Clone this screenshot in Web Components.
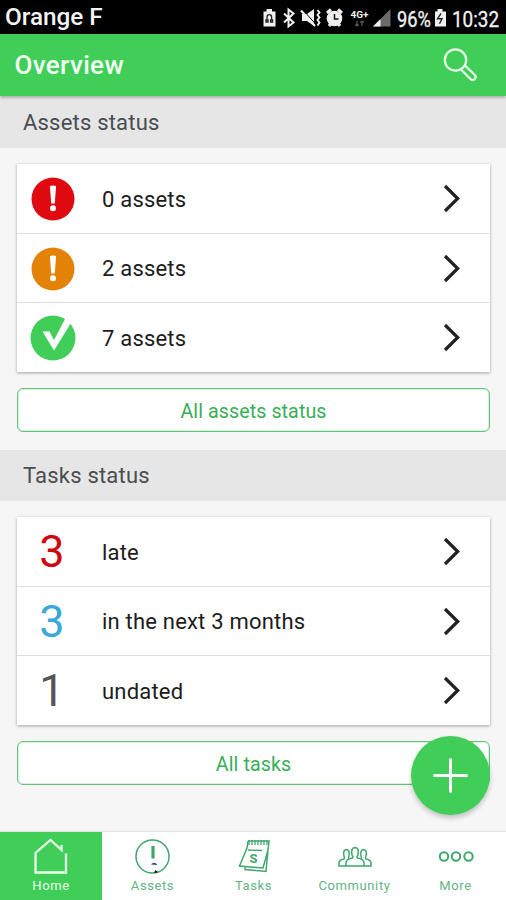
<!DOCTYPE html>
<html lang="en">
<head>
<meta charset="utf-8">
<title>Overview</title>
<style>
html,body{margin:0;height:100%;background:#f6f6f6}
body{font-family:Roboto,"Liberation Sans",sans-serif;overflow:hidden}
</style>
</head>
<body>
<overview-app></overview-app>
<script>
const define = (name, html) => customElements.define(name, class extends HTMLElement {
  constructor() {
    super();
    const t = document.createElement('template');
    t.innerHTML = html;
    this.attachShadow({mode: 'open'}).append(t.content.cloneNode(true));
  }
});

define('status-bar', `<style>
:host{display:flex;height:34px;background:#000;color:#f4f4f4;box-sizing:border-box;padding:0 0 0 5px;justify-content:space-between;align-items:center}
.name{font-size:24.300px;font-weight:500;line-height:34px}
svg{display:block;width:246px;height:34px}
text{font-family:Roboto,sans-serif}
</style>
<span class="name">Orange F</span>
<svg viewBox="260 0 246 34" fill="#f0f0f0">
  <path d="M263.500 11.500h3V9h5.500v2.500h3.500V26.500h-12z"/>
  <path d="M267 20v-3a2.300 2.300 0 0 1 4.600 0v3m-5.600 0h2v2h-2zm4.600 0h2v2h-2z" fill="none" stroke="#222" stroke-width="1.300"/>
  <path d="M284 13.500l9.500 9-5 4V9.500l5 4-9.500 9" fill="none" stroke="#f0f0f0" stroke-width="2"/>
  <path d="M302 14h5l7-5v17l-7-5h-5z"/>
  <path d="M303 10l13 14.500" stroke="#000" stroke-width="1"/>
  <path d="M301 10.500l14 15.500" stroke="#f0f0f0" stroke-width="2"/>
  <path d="M317.500 10l2 2.500-2 2.500 2 2.500-2 2.500 2 2.500-2 3" fill="none" stroke="#f0f0f0" stroke-width="1.900"/>
  <circle cx="334.500" cy="18.500" r="7.800"/>
  <path d="M327 13l4-3.500M342 13l-4-3.500M329 26l2-2.500M340 26l-2-2.500" stroke="#f0f0f0" stroke-width="3"/>
  <path d="M334.500 14v5h4" fill="none" stroke="#111" stroke-width="1.500"/>
  <text x="350.500" y="17.500" font-size="9.500" font-weight="700" textLength="18" lengthAdjust="spacingAndGlyphs">4G+</text>
  <path d="M357 21v5m-1.800-1.500L357 26l1.800-1.500M362 26v-5m-1.800 1.500L362 21l1.800 1.500" fill="none" stroke="#555" stroke-width="1.300"/>
  <path d="M390.500 9v17.500H373z" fill="#6b6b6b"/>
  <path d="M380.500 19v7.500H373z"/>
  <text x="397" y="26.500" font-size="22" textLength="34" lengthAdjust="spacingAndGlyphs" stroke="#f0f0f0" stroke-width=".35">96%</text>
  <path d="M435 11.500h2.500V9h5v2.500h3.500V26.500h-11z"/>
  <path d="M441 13.500l-3.500 5.200h4.500l-2.500 5" fill="none" stroke="#222" stroke-width="1.400"/>
  <text x="452" y="26.500" font-size="22" textLength="47" lengthAdjust="spacingAndGlyphs" stroke="#f0f0f0" stroke-width=".35">10:32</text>
</svg>`);

define('app-header', `<style>
:host{display:flex;position:relative;height:62px;background:#40ce59;color:#f2fff3;align-items:center;justify-content:space-between;padding:0 28px 0 14.500px;box-sizing:border-box;box-shadow:0 1px 3px rgba(0,0,0,.4)}
h1{margin:0;font-size:26px;font-weight:500;letter-spacing:.35px;line-height:60px;padding-bottom:1px}
svg{display:block}
</style>
<h1><slot></slot></h1>
<svg width="36" height="36" viewBox="0 0 36 36" fill="none" stroke="#e8ffe9" stroke-width="2.200" stroke-linejoin="round">
  <circle cx="13.500" cy="13" r="10.700"/>
  <path d="M19 22.500l9.500 9.500a2.700 2.700 0 0 0 4.300-4L23 18.500"/>
</svg>`);

define('section-title', `<style>
:host{display:flex;height:51px;background:#e6e6e6;color:#494d52;align-items:center;padding-left:23px;font-size:22px;letter-spacing:.2px;box-sizing:border-box}
</style><slot></slot>`);

define('status-card', `<style>
:host{display:grid;grid-template-rows:70px 69px 69px;margin:0 16px 0 17px;background:#fff;box-shadow:0 1px 3px rgba(0,0,0,.35)}
::slotted(*:not(:last-child)){border-bottom:1.500px solid #dedede}
</style><slot></slot>`);

define('status-row', `<style>
:host{display:grid;grid-template-columns:70px 1fr 48px;box-sizing:border-box;align-items:center;color:#1c1c1c;font-size:22px;letter-spacing:.2px;padding-top:1px}
.lead{display:flex;justify-content:center;font-size:45px;letter-spacing:0;line-height:60px}
.label{padding:0 0 0 15px}
svg{display:block}
</style>
<div class="lead"><slot name="lead"></slot></div>
<div class="label"><slot></slot></div>
<svg width="20" height="30" viewBox="0 0 20 30" fill="none" stroke="#222" stroke-width="3.200"><path d="M3 2L15.700 14.500 3 27"/></svg>`);

define('alert-icon', `<style>:host{display:block;margin-left:1.500px}svg{display:block}</style>
<svg width="46" height="46" viewBox="0 0 46 46"><circle cx="23" cy="23" r="21.500" fill="currentColor"/><path d="M19.900 10q3.100-1.200 6.200 0l-1.300 17.500h-3.600z" fill="#fff"/><circle cx="23" cy="32.300" r="3" fill="#fff"/></svg>`);

define('check-icon', `<style>:host{display:block;margin-left:1.500px}svg{display:block}</style>
<svg width="46" height="46" viewBox="0 0 46 46"><circle cx="23" cy="23" r="22.500" fill="#40ce59"/><path d="M12.500 16.500h7l4.500 8.500L35.500 3l5.500 5-17 27.500z" fill="#fff"/></svg>`);

define('outline-button', `<style>
:host{display:flex;height:44px;margin:0 16px 0 17px;box-sizing:border-box;border:1px solid #64c47b;outline:1px solid rgba(100,196,123,.25);outline-offset:-2px;border-radius:6px;background:#fff;color:#36af58;font-size:19.600px;letter-spacing:.1px;align-items:center;justify-content:center;padding-top:2px}
</style><slot></slot>`);

define('add-button', `<style>
:host{display:block;position:absolute;left:411px;top:736px;width:79px;height:79px;border-radius:50%;background:#40ce59;box-shadow:0 3px 5px rgba(0,0,0,.22)}
svg{display:block}
</style><svg width="79" height="79" viewBox="0 0 79 79" stroke="#fff" stroke-width="3"><path d="M22.500 39.500h34M39.500 22.500v34"/></svg>`);

define('nav-item', `<style>
:host{display:flex;flex-direction:column;align-items:center;color:#63b585;font-size:13px;letter-spacing:.6px;padding-top:5px;box-sizing:border-box}
:host([active]){background:#40ce59;color:#eaffec}
span{line-height:16px;margin-top:3px}
</style><slot name="icon"></slot><span><slot></slot></span>`);

define('bottom-nav', `<style>
:host{display:grid;grid-template-columns:102px 101px 101px 101px 101px;height:68px;background:#fff;box-shadow:0 -1px 1px rgba(0,0,0,.08)}
svg{display:block;width:40px;height:38px;fill:none;stroke:#3fa76d;stroke-width:1.500}
</style>
<nav-item active><svg slot="icon" viewBox="0 0 40 38" style="stroke:#eaffec;stroke-width:2.300"><path d="M35 16.500v19H4.500V16L19.500 3l11 10V8"/></svg>Home</nav-item>
<nav-item><svg slot="icon" viewBox="0 0 40 38"><circle cx="19.500" cy="19.500" r="16.500"/><path d="M20 9v12.500" stroke-width="3.200"/><path d="M18 27.500q3-3.500 6.500.5z" fill="#1747a0" stroke="none"/><path d="M21.500 35.500l1-2 2 1.500z" fill="#111" stroke="#111" stroke-width=".7"/></svg>Assets</nav-item>
<nav-item><svg slot="icon" viewBox="0 0 40 38"><path d="M14 4h21l-1 9-2 21.500-21-2v-2M14 4l-1 7-7.500 18 23.500 2 5-18"/><path d="M15 3v5m3-5v5m3-5v5m3-5v5m3-5v5m3-5v5m3-5v5" stroke-width="1.300"/><path d="M14 13l14 .5" stroke-width="1.300"/><text x="15.500" y="26" font-size="13" font-family="Roboto,sans-serif" font-weight="700" fill="#3fa76d" stroke="none">S</text></svg>Tasks</nav-item>
<nav-item><svg slot="icon" viewBox="0 0 40 38"><path d="M11 29v-3q0-4 6.500-5 1-1-.5-3-1.500-7 3-7.500 4.500.5 3 7.500-1.500 2-.5 3 6.500 1 6.500 5v3z"/><path d="M11 29H4v-3q0-3 5-4 1-1 0-3-1.500-6 2.500-6.500 3.500.5 2.500 6.500-1 2 0 3M29 29h7v-3q0-3-5-4-1-1 0-3 1.500-6-2.500-6.500-3.500.5-2.500 6.500 1 2 0 3"/></svg>Community</nav-item>
<nav-item><svg slot="icon" viewBox="0 0 40 38" style="stroke-width:2"><circle cx="8" cy="19.500" r="4.200"/><circle cx="20" cy="19.500" r="4.200"/><circle cx="32.500" cy="19.500" r="4.200"/></svg>More</nav-item>`);

define('overview-app', `<style>
:host{display:flex;flex-direction:column;position:relative;width:506px;height:900px;background:#f6f6f6;overflow:hidden}
main{flex:1;display:flex;flex-direction:column}
.first{margin-top:1px}
status-card{margin-top:16px}
outline-button{margin-top:16px}
.second{margin-top:18px}
</style>
<status-bar></status-bar>
<app-header>Overview</app-header>
<main>
  <section-title class="first">Assets status</section-title>
  <status-card>
    <status-row><alert-icon slot="lead" style="color:#df0a10"></alert-icon>0 assets</status-row>
    <status-row><alert-icon slot="lead" style="color:#e28308"></alert-icon>2 assets</status-row>
    <status-row><check-icon slot="lead"></check-icon>7 assets</status-row>
  </status-card>
  <outline-button>All assets status</outline-button>
  <section-title class="second">Tasks status</section-title>
  <status-card>
    <status-row><span slot="lead" style="color:#cf080d">3</span>late</status-row>
    <status-row><span slot="lead" style="color:#38a9d8">3</span>in the next 3 months</status-row>
    <status-row><span slot="lead" style="color:#555">1</span>undated</status-row>
  </status-card>
  <outline-button>All tasks</outline-button>
</main>
<bottom-nav></bottom-nav>
<add-button></add-button>`);
</script>
</body>
</html>
